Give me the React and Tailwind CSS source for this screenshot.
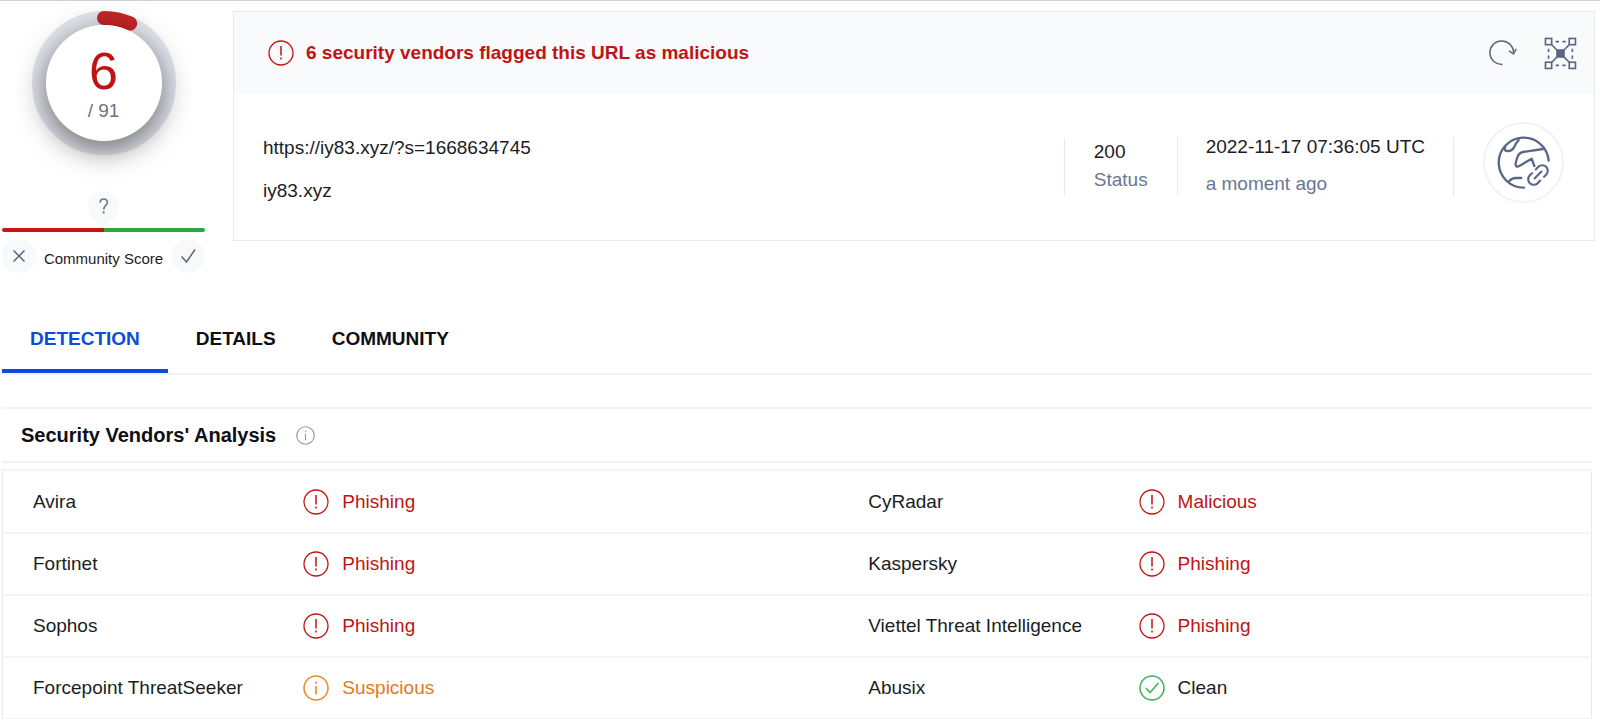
import React, { useState } from "react";

const TABS = ['DETECTION', 'DETAILS', 'COMMUNITY'];

const RESULTS = [
  [{ vendor: 'Avira', verdict: 'Phishing' }, { vendor: 'CyRadar', verdict: 'Malicious' }],
  [{ vendor: 'Fortinet', verdict: 'Phishing' }, { vendor: 'Kaspersky', verdict: 'Phishing' }],
  [{ vendor: 'Sophos', verdict: 'Phishing' }, { vendor: 'Viettel Threat Intelligence', verdict: 'Phishing' }],
  [{ vendor: 'Forcepoint ThreatSeeker', verdict: 'Suspicious' }, { vendor: 'Abusix', verdict: 'Clean' }],
];

const AlertIcon = () => (
  <svg className="size-[26px] shrink-0" viewBox="0 0 26 26" fill="none" stroke="currentColor" strokeWidth="1.3">
    <circle cx="13" cy="13" r="12" />
    <path d="M13 6v9.5M13 17.5v2" strokeWidth="1.5" />
  </svg>
);

const InfoIcon = ({ className }) => (
  <svg className={className} viewBox="0 0 26 26" fill="none" stroke="currentColor" strokeWidth="1.5">
    <circle cx="13" cy="13" r="12" />
    <path d="M13 6.5v2.2M13 11v8.5" strokeWidth="1.6" />
  </svg>
);

const CleanIcon = () => (
  <svg className="size-[26px] shrink-0" viewBox="0 0 26 26" fill="none" stroke="currentColor" strokeWidth="1.5">
    <circle cx="13" cy="13" r="12" />
    <path d="M7 13l4 4.6L19.4 8" />
  </svg>
);

const ReanalyzeIcon = () => (
  <svg className="size-[28px]" viewBox="0 0 28 28" fill="none" stroke="currentColor" strokeWidth="1.5">
    <path d="M13.5 25.5A11.8 11.8 0 1 1 24.5 13.5" />
    <path d="M20 11.8l4.6 3.2 2.6-5.2" />
  </svg>
);

const GraphIcon = () => (
  <svg className="size-[33px]" viewBox="0 0 34 34" fill="none" stroke="currentColor" strokeWidth="1.7">
    <rect x="1.5" y="1.5" width="6.4" height="6.4" />
    <rect x="26" y="1.5" width="6.4" height="6.4" />
    <rect x="1.5" y="26" width="6.4" height="6.4" />
    <rect x="26" y="26" width="6.4" height="6.4" />
    <path d="M8 8l18 18M26 8L8 26" />
    <path d="M12 4.7h3.4M19 4.7h3.4M12 29.2h3.4M19 29.2h3.4M4.7 12v3.4M4.7 19v3.4M29.2 12v3.4M29.2 19v3.4" />
    <rect x="12.6" y="12.6" width="8.8" height="8.8" fill="currentColor" stroke="none" />
  </svg>
);

const UrlIcon = () => (
  <svg className="size-[54px]" viewBox="112 78 162 162" fill="none" stroke="currentColor" strokeWidth="7" strokeLinecap="round" strokeLinejoin="round">
    <path d="M193 233A75 75 0 1 1 267 152" />
    <path d="M137 111c-4 7-2 12 5 12 11 1 16-2 21-11 3-8 7-14 14-22" />
    <path d="M250 117l-60 9c-10 2-14 8-17 16-4 11-6 18-5 23 1 6 6 6 11 3l37-22 8 22" />
    <path d="M147 216c5-8 13-12 22-12h16" />
    <g transform="translate(235 195) rotate(-45) scale(3.6) translate(-12 -12)" strokeWidth="1.8">
      <path d="M10 16.6H7A4.6 4.6 0 0 1 7 7.400h2.500M14 7.400h3a4.600 4.600 0 0 1 0 9.200h-2.500M8 12h8" />
    </g>
  </svg>
);

const Verdict = ({ verdict }) => {
  if (verdict === 'Clean') {
    return (
      <div className="flex items-center gap-[13px]">
        <span className="text-[#3fb057]"><CleanIcon /></span>
        <span>{verdict}</span>
      </div>
    );
  }
  if (verdict === 'Suspicious') {
    return (
      <div className="flex items-center gap-[13px] text-[#e8771a]">
        <InfoIcon className="size-[26px] shrink-0 text-[#ee8a26]" />
        <span>{verdict}</span>
      </div>
    );
  }
  return (
    <div className="flex items-center gap-[13px] text-[#c01414]">
      <AlertIcon />
      <span>{verdict}</span>
    </div>
  );
};

const ScoreGauge = ({ detections, total }) => {
  const angle = (detections / total) * 2 * Math.PI;
  const x = 72 + 65 * Math.sin(angle);
  const y = 72 - 65 * Math.cos(angle);

  return (
    <div className="relative size-36">
      <svg className="size-36" viewBox="0 0 144 144" fill="none" strokeWidth="14">
        <circle cx="72" cy="72" r="65" stroke="#e4e6ee" />
        <path d={`M72 7A65 65 0 0 1 ${x} ${y}`} stroke="#c52626" strokeLinecap="round" />
      </svg>
      <div className="absolute inset-[14px] flex flex-col items-center rounded-full bg-white pt-5 shadow-[0_8px_30px_rgba(0,0,0,0.55)]">
        <span className="text-[52px] leading-[52px] text-[#c01414]">{detections}</span>
        <span className="leading-7 text-[#6b7180]">/ {total}</span>
      </div>
    </div>
  );
};

const CommunityScore = () => (
  <div className="mt-9 w-full">
    <svg className="mx-auto h-[37px] w-[31px]" viewBox="0 0 31 37">
      <path d="M15.5 37C12 32 0 26 0 15.5a15.5 15.5 0 0 1 31 0C31 26 19 32 15.5 37z" fill="#f8f9fb" />
      <path d="M12 11.6c.3-2.4 1.7-3.6 3.7-3.6 2.1 0 3.6 1.3 3.6 3.4 0 3-3.6 3.2-3.6 7" fill="none" stroke="#73767d" strokeWidth="1.6" />
      <path d="M15.6 20.4v2" stroke="#73767d" strokeWidth="2" />
    </svg>
    <div className="flex h-1 overflow-hidden rounded-sm">
      <div className="flex-1 bg-[#c81414]" />
      <div className="flex-1 bg-[#2ba641]" />
    </div>
    <div className="mt-[7px] flex items-end justify-between">
      <button type="button" aria-label="Vote malicious" className="grid size-[34px] place-items-center rounded-full bg-[#f8f9fb] text-[#5b6480]">
        <svg className="size-3" viewBox="0 0 12 12" fill="none" stroke="currentColor" strokeWidth="1.5">
          <path d="M.5.5l11 11M11.5.5l-11 11" />
        </svg>
      </button>
      <span className="text-[15px]">Community Score</span>
      <button type="button" aria-label="Vote harmless" className="grid size-[34px] place-items-center rounded-full bg-[#f8f9fb] text-[#5b6480]">
        <svg className="size-4" viewBox="0 0 16 16" fill="none" stroke="currentColor" strokeWidth="1.5">
          <path d="M1.5 8.5l5 5.5L15 1.5" />
        </svg>
      </button>
    </div>
  </div>
);

const UrlCard = () => (
  <section className="min-w-0 flex-1 border border-[#e6e9f1]">
    <header className="flex h-[82px] items-center bg-[#f9fafc] pr-[17px] pl-[34px]">
      <div className="flex items-center gap-3 text-[#c01414]">
        <AlertIcon />
        <h1 className="font-bold">6 security vendors flagged this URL as malicious</h1>
      </div>
      <div className="ml-auto flex items-center gap-[27px] text-[#5b6583]">
        <button type="button" aria-label="Reanalyze"><ReanalyzeIcon /></button>
        <button type="button" aria-label="Open in graph"><GraphIcon /></button>
      </div>
    </header>
    <div className="flex items-start pt-7 pr-[30px] pb-[28px] pl-[29px]">
      <div className="min-w-0 flex-1 pt-1 leading-[43px]">
        <p className="truncate">https://iy83.xyz/?s=1668634745</p>
        <p className="truncate">iy83.xyz</p>
      </div>
      <div className="mt-4 border-x border-[#e6e9f1] px-[29px] pb-[2px] leading-7">
        <p>200</p>
        <p className="text-[#6b7694]">Status</p>
      </div>
      <div className="mt-[6px] pr-7 pl-7 leading-[37px] whitespace-nowrap">
        <p>2022-11-17 07:36:05 UTC</p>
        <p className="text-[#6b7694]">a moment ago</p>
      </div>
      <div className="mt-4 mr-[29px] h-[58px] w-px bg-[#e6e9f1]" />
      <div className="grid size-[81px] place-items-center rounded-full border-2 border-[#f1f2f8] text-[#5b6788]">
        <UrlIcon />
      </div>
    </div>
  </section>
);

export default function App() {
  const [activeTab, setActiveTab] = useState('DETECTION');

  return (
    <div className="min-h-screen border-t border-[#d0d0d0] bg-white font-['Liberation_Sans',Arial,sans-serif] text-[19px] leading-7 text-[#1b1d24]">
      <div className="flex items-start gap-7 pt-[10px] pr-[5px] pl-[2px]">
        <aside className="flex w-[203px] shrink-0 flex-col items-center">
          <ScoreGauge detections={6} total={91} />
          <CommunityScore />
        </aside>
        <UrlCard />
      </div>

      <main className="mt-7 pr-2 pl-[2px]">
        <div role="tablist" className="flex border-b-2 border-[#f1f2f8]">
          {TABS.map((tab) => (
            <button
              key={tab}
              type="button"
              role="tab"
              aria-selected={tab === activeTab}
              onClick={() => setActiveTab(tab)}
              className={
                tab === activeTab
                  ? 'h-[72px] border-b-4 border-[#0b4dda] px-7 pt-2 font-bold text-[#0b4dda]'
                  : 'h-[72px] border-b-4 border-transparent px-7 pt-2 font-bold text-[#0d0f14]'
              }
            >
              {tab}
            </button>
          ))}
        </div>

        <div className="mt-8 flex h-14 items-center gap-5 border-y-2 border-[#f1f2f8] pl-[19px]">
          <h2 className="text-[20px] font-bold text-[#0d0f14]">Security Vendors' Analysis</h2>
          <InfoIcon className="size-[19px] text-[#8f95a8]" />
        </div>

        <div className="mt-[6px] border-x border-t-2 border-[#e6e9f1] border-t-[#f3f4f8] px-px">
          <table className="w-full table-fixed border-collapse text-left">
            <colgroup>
              <col className="w-1/6" />
              <col className="w-[36%]" />
              <col className="w-1/6" />
              <col />
            </colgroup>
            <tbody>
              {RESULTS.map((row) => (
                <tr key={row[0].vendor} className="h-[62px] border-b-2 border-[#f3f4f8]">
                  {row.map((item) => (
                    <React.Fragment key={item.vendor}>
                      <th scope="row" className="pl-[29px] font-normal whitespace-nowrap">{item.vendor}</th>
                      <td className="pl-[35px]"><Verdict verdict={item.verdict} /></td>
                    </React.Fragment>
                  ))}
                </tr>
              ))}
            </tbody>
          </table>
        </div>
      </main>
    </div>
  );
}
